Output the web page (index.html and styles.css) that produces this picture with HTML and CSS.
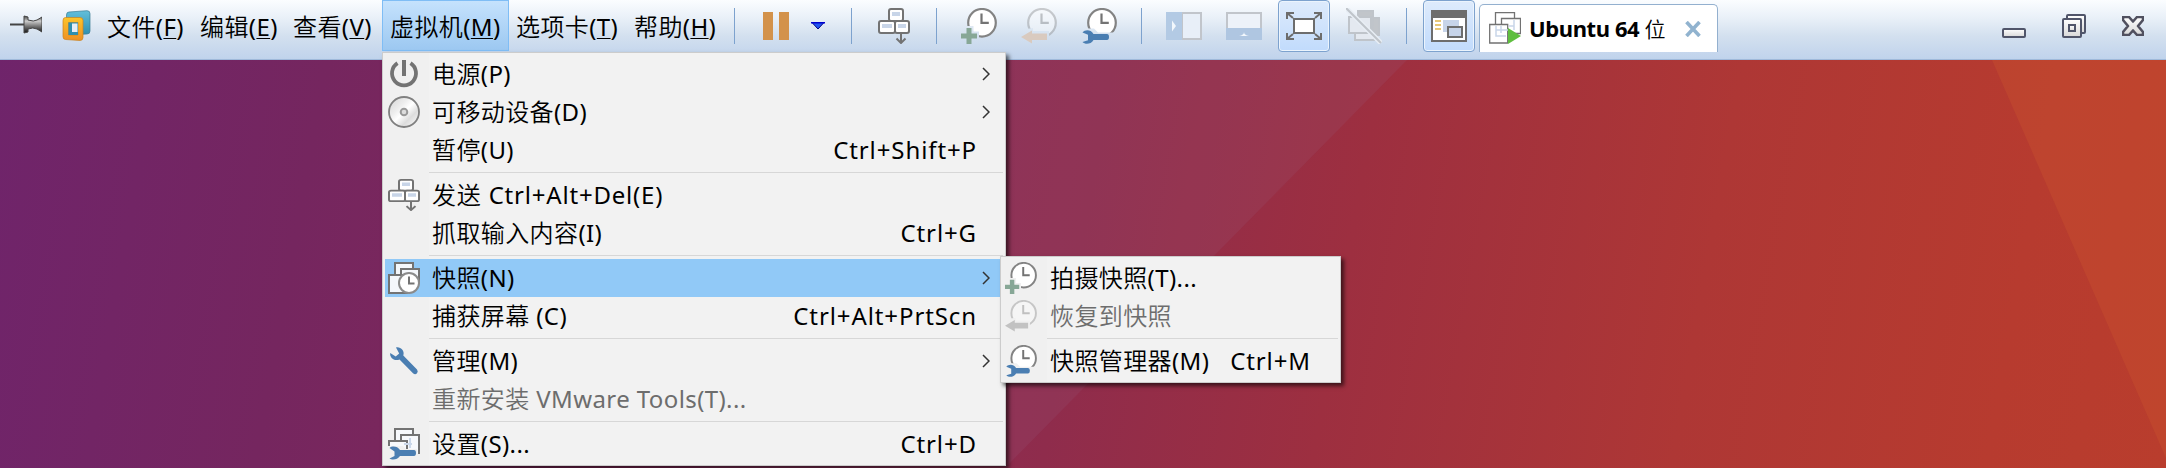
FILE: index.html
```html
<!DOCTYPE html>
<html lang="zh-CN">
<head>
<meta charset="utf-8">
<title>Ubuntu 64 位 - VMware Workstation</title>
<link rel="stylesheet" href="styles.css">
</head>
<body>
<svg class="defs" width="0" height="0" aria-hidden="true">
  <defs>
    <linearGradient id="metal" x1="0" y1="0" x2="0" y2="1"><stop offset="0" stop-color="#444"/><stop offset=".3" stop-color="#ccc"/><stop offset=".6" stop-color="#777"/><stop offset="1" stop-color="#111"/></linearGradient>
    <linearGradient id="teal" x1="0" y1="0" x2="0" y2="1"><stop offset="0" stop-color="#62bfdb"/><stop offset="1" stop-color="#2f8fae"/></linearGradient>
    <linearGradient id="amber" x1="0" y1="0" x2="0" y2="1"><stop offset="0" stop-color="#fcc52a"/><stop offset="1" stop-color="#ee8f22"/></linearGradient>
    <linearGradient id="win" x1="0" y1="0" x2="0" y2="1"><stop offset="0" stop-color="#fff"/><stop offset="1" stop-color="#d8d8d8"/></linearGradient>
    <linearGradient id="disc" x1="0" y1="0" x2="1" y2="1"><stop offset="0" stop-color="#d4d4d4"/><stop offset=".35" stop-color="#eee"/><stop offset=".5" stop-color="#fff"/><stop offset=".7" stop-color="#ddd"/><stop offset="1" stop-color="#fff"/></linearGradient>
    <mask id="cut-plus" maskUnits="userSpaceOnUse" x="0" y="0" width="36" height="36"><path fill="#fff" d="M0 0h36v36H0z"/><path d="M3.500 18h9v5.500h5.500v9H12v4H3.500V32H0v-9h3.500z"/></mask>
    <mask id="cut-arrow" maskUnits="userSpaceOnUse" x="0" y="0" width="36" height="36"><path fill="#fff" d="M0 0h36v36H0z"/><path d="M0 22l12-2v3h16v11H0z"/></mask>
    <mask id="cut-wrench" maskUnits="userSpaceOnUse" x="0" y="0" width="36" height="36"><path fill="#fff" d="M0 0h36v36H0z"/><path d="M0 20.500h13l4 4h19V36H0z"/></mask>
    <symbol id="clock" viewBox="0 0 36 36"><circle cx="21" cy="14.800" r="13.800" fill="#fff" stroke="#838383" stroke-width="2.200"/><path d="M20.500 5.500v9.300h7.300" fill="none" stroke="#737373" stroke-width="2.200"/></symbol>
    <symbol id="snap-take" viewBox="0 0 36 36"><g mask="url(#cut-plus)"><use href="#clock" width="36" height="36"/></g><path d="M5.500 20h5v5.500H16v5h-5.500V36h-5v-5.500H0v-5h5.500z" fill="#87a796"/></symbol>
    <symbol id="snap-back" viewBox="0 0 36 36"><g mask="url(#cut-arrow)" opacity=".38"><use href="#clock" width="36" height="36"/></g><path d="M0 29l11-6.500v3H26v6.500H11v3.500z" fill="currentColor"/></symbol>
    <symbol id="wrench-h" viewBox="0 0 36 36"><path d="M1.500 24.500C4 21.600 9.500 21.200 12.500 26H26q2 0 2 3t-2 3H12.500C10 36.500 4 36.800 1.500 34l5.500-1.700v-5.600z" fill="#4a7eb2"/></symbol>
    <symbol id="snap-manage" viewBox="0 0 36 36"><g mask="url(#cut-wrench)"><use href="#clock" width="36" height="36"/></g><use href="#wrench-h" width="36" height="36"/></symbol>
    <symbol id="keys" viewBox="0 0 32 36"><g fill="#fff" stroke="#737373" stroke-width="2"><rect x="11" y="1" width="14" height="12" rx="2"/><rect x="1" y="13" width="16" height="12" rx="2"/><rect x="17" y="13" width="14" height="12" rx="2"/><path d="M23 26v8M18.500 30.500L23 35l4.500-4.500" fill="none"/></g><path d="M14 4h8v4h-8zM4 16h10v4H4zM20 16h8v4h-8z" fill="#c8d5e8"/></symbol>
  </defs>
</svg>

<div class="screen">
  <svg class="wallpaper" viewBox="0 0 2166 408" preserveAspectRatio="none" aria-hidden="true">
    <path d="M700 0H1407L1005 408H700z" fill="#9a6080" opacity=".17"/>
    <path d="M1992 0H2166V398z" fill="#e07030" opacity=".17"/>
  </svg>

  <header class="bar">
    <svg class="pin" width="32" height="20" viewBox="0 0 32 20"><path d="M0 9.500h15" stroke="#444" stroke-width="2"/><path d="M14 1l4 1v3q6 2 9 0l5-3v15l-5-3q-4-2-9 0v3l-4 1z" fill="url(#metal)" stroke="#444"/></svg>
    <svg class="logo" width="30" height="32" viewBox="0 0 30 32"><path d="M7 2L25 .700q3 0 3 3V21q0 3-3 3L7 25q-2.500 0-2.500-3V5q0-3 2.500-3z" fill="url(#teal)" stroke="#397c93" stroke-width=".7"/><path fill-rule="evenodd" d="M3.500 7.500H18q3 0 3 3V27.500q0 3-3 3L3.500 29.500q-2.500 0-2.500-3v-16q0-3 2.500-3zM6.500 12.500V25h9.500V12.500z" fill="url(#amber)" stroke="#c98320" stroke-width=".7"/><path d="M6.500 12.500H16V25H6.500z" fill="#2f8fae"/><path d="M10 13.500h5.500v8.500H10z" fill="#e6eef7"/></svg>

    <nav class="menus">
      <span class="menu">文件(<u>F</u>)</span>
      <span class="menu">编辑(<u>E</u>)</span>
      <span class="menu">查看(<u>V</u>)</span>
      <span class="menu open">虚拟机(<u>M</u>)</span>
      <span class="menu">选项卡(<u>T</u>)</span>
      <span class="menu">帮助(<u>H</u>)</span>
    </nav>

    <div class="tools">
      <i class="rule"></i>
      <svg class="pause" width="26" height="28" viewBox="0 0 26 28"><path d="M0 0h10v28H0zM16 0h10v28H16z" fill="#d3924b"/></svg>
      <svg class="drop" width="14" height="8" viewBox="0 0 14 8"><path d="M1 .5h12L7 7z" fill="#2456ee" stroke="#000080"/><path d="M0 0h14v1.500H0z" fill="#0000d0"/></svg>
      <i class="rule"></i>
      <svg class="t-keys" width="32" height="36"><use href="#keys"/></svg>
      <i class="rule"></i>
      <svg class="t-snap" width="36" height="36"><use href="#snap-take"/></svg>
      <svg class="t-back" width="36" height="36"><use href="#snap-back"/></svg>
      <svg class="t-manage" width="36" height="36"><use href="#snap-manage"/></svg>
      <i class="rule"></i>
      <svg class="t-side" width="36" height="28" viewBox="0 0 36 28"><path d="M16 1h19v26H16z" fill="#e8eff8" stroke="#c1c5cb" stroke-width="2"/><path d="M0 0h16v28H0z" fill="#b3cae4"/><path d="M6 8.500l4 5.500-4 5.500z" fill="#f2f7fc"/></svg>
      <svg class="t-bottom" width="36" height="28" viewBox="0 0 36 28"><path d="M1 1h34v16H1z" fill="#edf2f9" stroke="#c1c5cb" stroke-width="2"/><path d="M0 16h36v12H0z" fill="#afc6e1"/><path d="M13 24q5-1 5-4 0 3 5 4z" fill="#f2f7fc"/></svg>
      <span class="pressed"><svg width="36" height="28" viewBox="0 0 36 28"><path d="M8 7h20v14H8z" fill="#fff" stroke="#6d6d6d" stroke-width="2"/><path d="M7 6L1 1M29 6l6-5M7 22l-6 5M29 22l6 5M1 7V1h7M28 1h7v6M1 21v6h7M28 27h7v-6" fill="none" stroke="#6d6d6d" stroke-width="2"/></svg></span>
      <svg class="t-unity" width="36" height="36" viewBox="0 0 36 36"><g fill="#e4e9f0" stroke="#bfc4ca" stroke-width="2"><path d="M12 3h15v7H12z" fill="#c1c5ca"/><path d="M27 10h6v17h-7z" fill="#c1c5ca"/><path d="M9 24v8h19v-8z"/><path d="M3 9h22v16H3z"/></g><path d="M0 0l35 35" stroke="#e8eef5" stroke-width="5"/><path d="M0 0l35 35" stroke="#bfc4ca" stroke-width="2"/></svg>
      <i class="rule"></i>
      <span class="pressed thumb"><svg width="36" height="32" viewBox="0 0 36 32"><path d="M1 1h34v30H1z" fill="#fff" stroke="#6d6d6d" stroke-width="2"/><path d="M0 0h36v8H0z" fill="#6d6d6d"/><path d="M4 10h6v2H4zM4 14h6v2H4zM4 18h6v2H4z" fill="#e7c778"/><path d="M12 10h16v12H12z" fill="#c7d4e9"/><path d="M17 17h14v10H17z" fill="#c7d4e9" stroke="#6d6d6d" stroke-width="2"/></svg></span>
    </div>

    <div class="tab">
      <svg width="32" height="32" viewBox="0 0 32 32"><g fill="#fff" stroke="#727272" stroke-width="1.300"><path d="M6.500.7h19v12h-19z"/><path d="M12.500 6.500h19v15h-19z"/><path d="M.7 12.500h18v18.500H.7z"/></g><path d="M7 14v10h10M12 14v7M7 18h12M25 8v10M20 14h5" fill="none" stroke="#c9d6e9" stroke-width="1.500"/><path d="M19 24h13v8H19z" fill="#fff"/><path d="M19 16v16l13-8z" fill="#5fbe3f"/></svg>
      <span class="tab-name">Ubuntu 64 <span class="wei">位</span></span>
      <svg class="tab-x" width="16" height="16" viewBox="0 0 16 16"><path d="M1.500 1l13 14M14.500 1l-13 14" stroke="#91b3cf" stroke-width="3.600"/></svg>
    </div>

    <div class="controls">
      <svg class="min" width="24" height="10" viewBox="0 0 24 10"><rect x="1" y="1" width="22" height="8" rx="1" fill="url(#win)" stroke="#50556a" stroke-width="2"/></svg>
      <svg width="24" height="24" viewBox="0 0 24 24"><g fill="url(#win)" stroke="#50556a" stroke-width="2"><rect x="5" y="1" width="18" height="18" rx="1"/><rect x="1" y="5" width="18" height="18" rx="1"/><path d="M7 11h6v6H7z"/></g></svg>
      <svg width="22" height="20" viewBox="0 0 22 20"><path d="M1 1h6l4 4.500L15 1h6v3l-5 6 5 6v3h-6l-4-4.500L7 19H1v-3l5-6-5-6z" fill="url(#win)" stroke="#50505f" stroke-width="2.600" stroke-linejoin="round"/></svg>
    </div>
  </header>

  <section class="popup main">
    <div class="row"><svg width="32" height="32" viewBox="0 0 32 32"><path d="M9.500 5.200a12 12 0 1 0 13 0" fill="none" stroke="#737373" stroke-width="3.800"/><path d="M14 2h4v16h-4z" fill="#737373"/></svg><span>电源(P)</span><svg class="arrow" width="8" height="14" viewBox="0 0 8 14"><path d="M1 1l6 6-6 6" /></svg></div>
    <div class="row"><svg width="32" height="32" viewBox="0 0 32 32"><circle cx="16" cy="16" r="15" fill="url(#disc)" stroke="#808080" stroke-width="1.800"/><circle cx="16" cy="16" r="3.300" fill="#ddd" stroke="#999" stroke-width="2"/></svg><span>可移动设备(D)</span><svg class="arrow" width="8" height="14" viewBox="0 0 8 14"><path d="M1 1l6 6-6 6" /></svg></div>
    <div class="row"><i></i><span>暂停(U)</span><kbd>Ctrl+Shift+P</kbd></div>
    <hr>
    <div class="row"><svg width="32" height="32" viewBox="0 0 32 36" preserveAspectRatio="none"><use href="#keys" width="32" height="36"/></svg><span class="send">发送 Ctrl+Alt+Del(E)</span></div>
    <div class="row"><i></i><span>抓取输入内容(I)</span><kbd>Ctrl+G</kbd></div>
    <hr>
    <div class="row hot"><svg width="32" height="32" viewBox="0 0 32 32"><g fill="#f4f7fb" stroke="#737373" stroke-width="2"><path d="M7 1h18v12H7z"/><path d="M13 7h18v14H13z"/><path d="M1 13h18v18H1z"/></g><circle cx="21" cy="21" r="10" fill="#fff" stroke="#8b8b8b" stroke-width="2"/><path d="M21 14.500v7h5.500" fill="none" stroke="#737373" stroke-width="2"/></svg><span>快照(N)</span><svg class="arrow" width="8" height="14" viewBox="0 0 8 14"><path d="M1 1l6 6-6 6" /></svg></div>
    <div class="row"><i></i><span>捕获屏幕 (C)</span><kbd>Ctrl+Alt+PrtScn</kbd></div>
    <hr>
    <div class="row"><svg width="32" height="32" viewBox="0 0 32 32"><path d="M8 2.500C12.500 1.500 17 6 15.300 10.500L29 24.500q1.500 2 0 3.800-1.800 1.700-4 0L11.500 14.500C6 16.500 1.500 12.500 2.200 8l5.500 3.500 3.500-3z" fill="#4a7eb2"/></svg><span>管理(M)</span><svg class="arrow" width="8" height="14" viewBox="0 0 8 14"><path d="M1 1l6 6-6 6" /></svg></div>
    <div class="row off"><i></i><span>重新安装 VMware Tools(T)...</span></div>
    <hr>
    <div class="row"><svg width="32" height="32" viewBox="0 0 32 32"><g fill="#f7f9fc" stroke="#737373" stroke-width="2"><path d="M7 1h18v12H7z"/><path d="M31 26V7H13v12"/><path d="M1 18v-5h18v10"/></g><path d="M22 10v10M16 16h8" stroke="#cbd8ea" stroke-width="2"/><path d="M0 18h15l3 3h11v11H0z" fill="#f0f0f0"/><path d="M1.500 20C4 17.700 9.500 18 12 22h14q2 0 2 3t-2 3H12C9.500 32 4 32.300 1.500 30.500l5-2.500v-4.500z" fill="#4a7eb2"/></svg><span>设置(S)...</span><kbd>Ctrl+D</kbd></div>
  </section>

  <section class="popup sub">
    <div class="row"><svg width="32" height="32"><use href="#snap-take"/></svg><span>拍摄快照(T)...</span></div>
    <div class="row off"><svg width="32" height="32"><use href="#snap-back"/></svg><span>恢复到快照</span></div>
    <hr>
    <div class="row"><svg width="32" height="32"><use href="#snap-manage"/></svg><span>快照管理器(M)</span><kbd>Ctrl+M</kbd></div>
  </section>
</div>
</body>
</html>
```
FILE: styles.css
```css
* { box-sizing: border-box; }
body {
  margin: 0;
  font: 400 24px/38px "Noto Sans", "Noto Sans CJK SC DemiLight", "Noto Sans CJK SC", sans-serif;
  color: #000;
}
.defs { position: absolute; }
svg { display: block; flex: none; }

.screen {
  position: relative;
  width: 2166px;
  height: 468px;
  overflow: hidden;
  background: linear-gradient(100deg, #6f246b 0%, #75265f 15%, #8a2b54 42%, #8f2c4c 50%, #9d2f40 62%, #ae3735 78%, #b73b2f 92%, #b93d2d 100%);
}
.wallpaper {
  position: absolute;
  left: 0;
  top: 60px;
  width: 2166px;
  height: 408px;
}

.bar {
  position: relative;
  display: flex;
  align-items: flex-start;
  height: 60px;
  background: linear-gradient(#fbfdff 0, #e9f0f8 18px, #d3e0ef 36px, #c0d3ec 59px);
  border-bottom: 1px solid #9fb9da;
}
.pin { margin: 15px 0 0 10px; }
.logo { margin: 10px 0 0 20px; }

.menus {
  display: grid;
  grid-template-columns: 93px 93px 96px 127px 118px 99px;
  margin-left: 8px;
  letter-spacing: .4px;
}
.menu {
  height: 51px;
  padding: 8px 0 0 7px;
  white-space: nowrap;
}
.menu u {
  text-decoration-thickness: 1px;
  text-underline-offset: 2px;
}
.menu.open {
  padding: 7px 0 0 7px;
  border: 1px solid #7fbdf5;
  background: linear-gradient(#c5e2fd, #9cc8f1);
}

.tools { display: flex; margin-left: 8px; }
.rule { width: 1px; height: 36px; margin-top: 8px; background: #7da2ce; }
.pause { margin: 12px 0 0 28px; }
.drop { margin: 22px 26px 0 22px; }
.t-keys { margin: 8px 26px 0; }
.t-snap { margin: 8px 0 0 24px; }
.t-back { margin: 8px 0 0 24px; color: #d9cabf; }
.t-manage { margin: 8px 24px 0; }
.t-side { margin: 12px 0 0 24px; }
.t-bottom { margin: 12px 16px 0 24px; }
.pressed {
  width: 52px;
  height: 52px;
  padding: 11px 7px;
  border: 1px solid #7da2ce;
  border-radius: 4px;
  background: linear-gradient(#deebfc, #c1dbfc);
  box-shadow: inset 0 0 0 1px #ebf4fd;
}
.thumb { margin-left: 16px; padding-top: 9px; }
.t-unity { margin: 8px 24px 0 16px; }

.tab {
  display: flex;
  width: 239px;
  height: 48px;
  margin: 4px 0 0 4px;
  padding: 7px 0 0 9px;
  border: 1px solid #93b0cf;
  border-bottom: 0;
  border-radius: 5px 5px 0 0;
  background: #fff;
}
.tab-name {
  width: 148px;
  margin-left: 8px;
  font-size: 22px;
  font-weight: bold;
  line-height: 33px;
  letter-spacing: -.4px;
  white-space: nowrap;
}
.wei { font-weight: 400; font-size: 21px; }
.tab-x { margin: 9px 0 0 8px; }

.controls {
  display: flex;
  gap: 36px;
  align-items: flex-start;
  margin: 14px 22px 0 auto;
}
.controls .min { margin-top: 14px; }
.controls svg:last-child { margin-top: 2px; }

.popup {
  position: absolute;
  padding: 2px;
  border: 1px solid #ccc;
  background: linear-gradient(90deg, #f0f0f0 46px, #f2f2f2 46px);
  box-shadow: 3px 3px 4px rgba(0, 0, 0, .6);
}
.main { left: 382px; top: 52px; width: 624px; height: 414px; }
.sub { left: 1000px; top: 256px; width: 341px; height: 127px; }
.row {
  display: flex;
  height: 38px;
  padding: 3px 27px 0 3px;
  white-space: nowrap;
}
.row > i { width: 32px; }
.row > span { margin: -3px 0 0 12px; letter-spacing: .4px; }
.row > .send { letter-spacing: .8px; }
.row > kbd { margin: -3px -1px 0 auto; font: inherit; letter-spacing: .9px; }
.sub .row > kbd { margin-right: 0; }
.sub .row > svg { margin-left: -1px; margin-right: 1px; }
.row > .arrow {
  margin: 9px -14px 0 auto;
  fill: none;
  stroke: #333;
  stroke-width: 1.5;
}
.hot { background: #91c9f7; }
.off { color: #6d6d6d; }
.off svg { color: #c2c2c2; }
hr {
  height: 1px;
  margin: 3px 0 3px 44px;
  border: 0;
  background: #d7d7d7;
}
```
